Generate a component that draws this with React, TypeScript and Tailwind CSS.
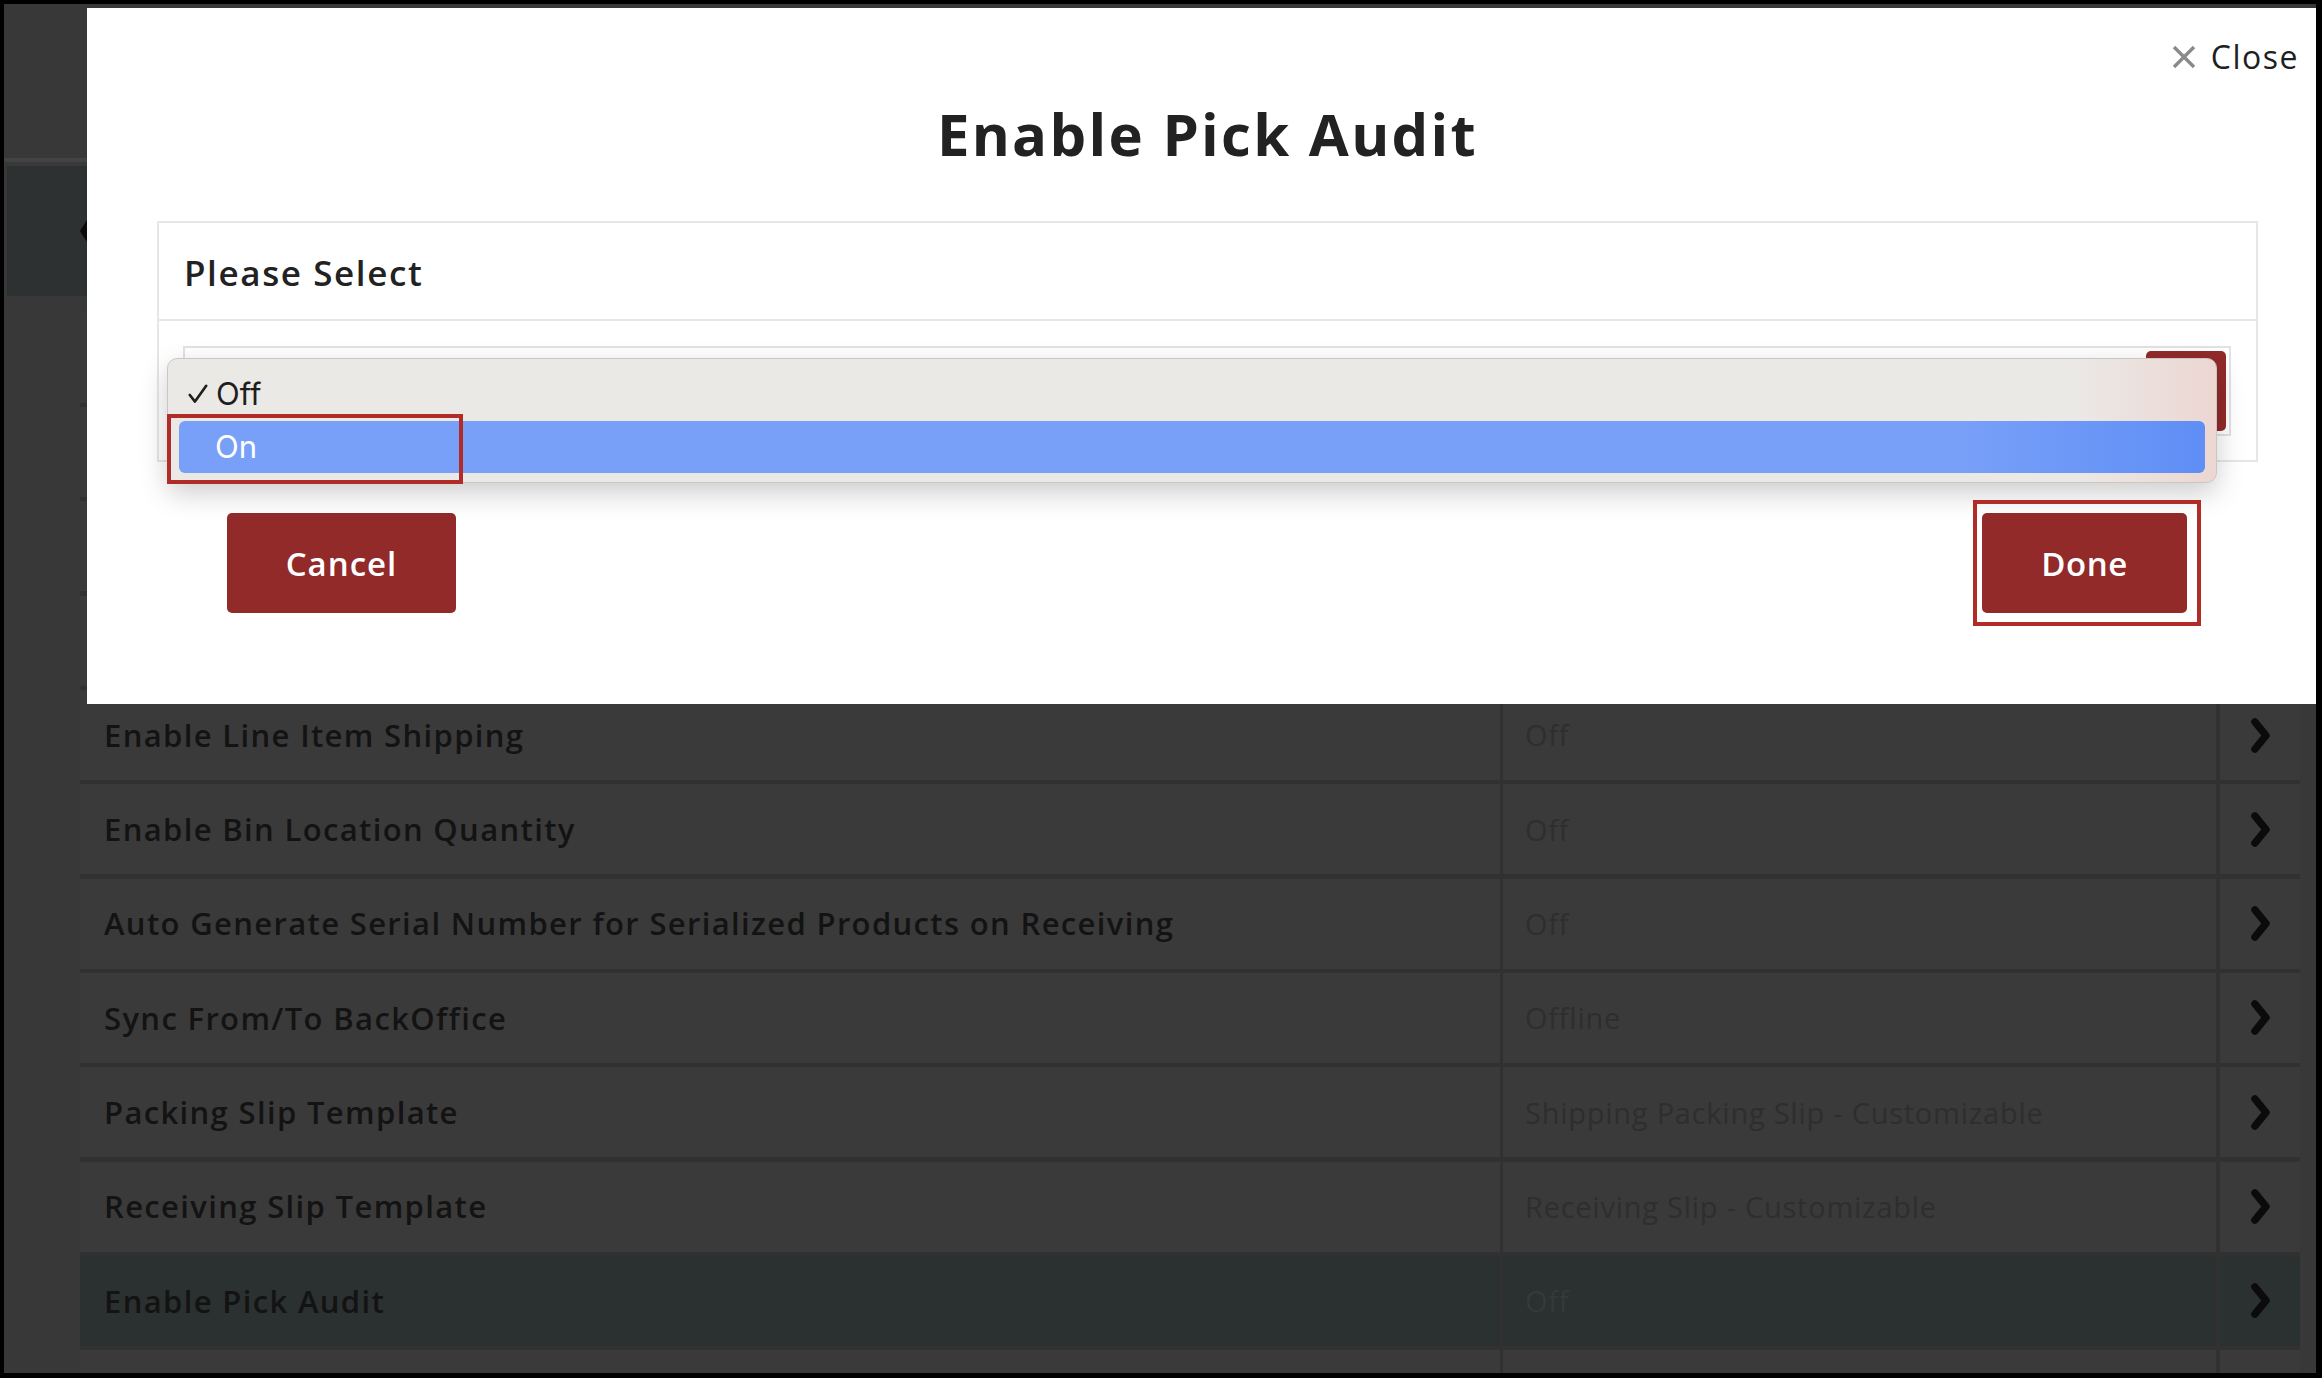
import React from "react";

type Row = { label: string; value: string; chevron: boolean; active?: boolean };

const rows: Row[] = [
  { label: "", value: "", chevron: false },
  { label: "", value: "", chevron: false },
  { label: "", value: "", chevron: false },
  { label: "", value: "", chevron: false },
  { label: "Enable Line Item Shipping", value: "Off", chevron: true },
  { label: "Enable Bin Location Quantity", value: "Off", chevron: true },
  { label: "Auto Generate Serial Number for Serialized Products on Receiving", value: "Off", chevron: true },
  { label: "Sync From/To BackOffice", value: "Offline", chevron: true },
  { label: "Packing Slip Template", value: "Shipping Packing Slip - Customizable", chevron: true },
  { label: "Receiving Slip Template", value: "Receiving Slip - Customizable", chevron: true },
  { label: "Enable Pick Audit", value: "Off", chevron: true, active: true },
  { label: "", value: "", chevron: false },
];

function ChevronRight() {
  return (
    <svg width="22" height="35" viewBox="0 0 22 35" aria-hidden="true">
      <polyline points="5,4 16,17.5 5,31" fill="none" stroke="#0b0b0b" strokeWidth="7.5" strokeLinecap="round" strokeLinejoin="round" />
    </svg>
  );
}

function ChevronLeft() {
  return (
    <svg width="18" height="30" viewBox="0 0 18 30" aria-hidden="true">
      <polygon points="17.5,0 9.5,0 0,15 9.5,30 17.5,30 8,15" fill="#0b0b0b" />
    </svg>
  );
}

function BackgroundPage() {
  return (
    <div className="flex flex-col">
      <div className="h-[154px] bg-[#383838]" />
      <div className="h-[4px] bg-[#434343]" />
      <div className="h-[4px] bg-[#393939]" />
      <div className="h-[130px] ml-[3px] bg-[#2d3131] flex items-center pl-[73px]">
        <ChevronLeft />
      </div>
      <div className="h-[16.7px]" />
      <div className="ml-[76px] w-[2220px] flex flex-col gap-[4.33px] bg-[#313131]">
        {rows.map((r, i) => {
          const bg = r.active ? "bg-[#2b3030]" : "bg-[#3a3a3a]";
          const valueColor = r.active ? "text-[#353939]" : "text-[#2e2e2e]";
          return (
            <div key={i} className="h-[90px] flex gap-[3px] shrink-0">
              <div className={`w-[1420px] flex items-center pl-[24px] ${bg}`}>
                <span className="text-[31px] font-semibold tracking-[1.35px] text-[#131313]">{r.label}</span>
              </div>
              <div className={`w-[713px] flex items-center pl-[22px] ${bg}`}>
                <span className={`text-[29px] font-normal tracking-[0.75px] ${valueColor}`}>{r.value}</span>
              </div>
              <div className={`ml-[1px] flex-1 flex items-center justify-center pl-[2px] ${bg}`}>
                {r.chevron ? <ChevronRight /> : null}
              </div>
            </div>
          );
        })}
      </div>
    </div>
  );
}

function CheckIcon() {
  return (
    <svg width="20" height="20" viewBox="0 0 20 20" aria-hidden="true">
      <polyline points="1.8,11 7,17.6 18.2,1.8" fill="none" stroke="#1e1e1e" strokeWidth="2.6" strokeLinecap="round" strokeLinejoin="round" />
    </svg>
  );
}

function CloseX() {
  return (
    <svg width="26" height="24" viewBox="0 0 26 24" aria-hidden="true">
      <line x1="3" y1="2" x2="23" y2="22" stroke="#8a8a8a" strokeWidth="3.4" />
      <line x1="23" y1="2" x2="3" y2="22" stroke="#8a8a8a" strokeWidth="3.4" />
    </svg>
  );
}

function Modal() {
  return (
    <div className="absolute left-[83px] top-[4px] w-[2241px] h-[696px] bg-white flex flex-col">
      <div className="flex justify-end pr-[29px] pt-[27px]">
        <div className="flex items-center gap-[14px] h-[44px] text-[32px] leading-[44px] tracking-[1.5px] text-[#1f1f1f]">
          <CloseX />
          <span>Close</span>
        </div>
      </div>
      <h1 className="mt-[20px] text-center text-[58px] leading-[70px] font-bold text-[#222222] tracking-[2.3px]">
        Enable Pick Audit
      </h1>
      <div className="mt-[52px] mx-[70px] border-2 border-[#e6e6e6]">
        <div className="h-[98px] flex items-center pl-[25px] pt-[4px] border-b-2 border-[#e6e6e6]">
          <span className="text-[35px] font-semibold text-[#222222] tracking-[1.6px]">Please Select</span>
        </div>
        <div className="pt-[25px] pb-[24px] pl-[24px] pr-[25px]">
          <div className="relative h-[90px] border-2 border-[#e2e2e2] flex justify-end p-[3px]">
            <div className="w-[80px] h-[80px] rounded-[5px] bg-[#922a2a]" />
            <div className="absolute left-[-18px] top-[10px] w-[2050px] h-[125px] rounded-[10px] border border-[#c9c7c4] bg-[linear-gradient(to_right,#ebe9e6_93%,#ecd6d2_100%)] shadow-[0_10px_28px_rgba(0,0,0,0.2)] font-['Inter',sans-serif]">
              <div className="h-[62px] flex items-center pl-[20px] pt-[8px]">
                <CheckIcon />
                <span className="ml-[8px] text-[31px] text-[#1e1e1e]">Off</span>
              </div>
              <div className="mx-[11px] h-[52px] rounded-[6px] bg-[linear-gradient(to_right,#78a0f9_88%,#5f8ef5_100%)] flex items-center pl-[36px]">
                <span className="text-[31px] text-white">On</span>
              </div>
              <div className="absolute left-[-1px] top-[55px] w-[296px] h-[70px] border-[4px] border-[#b12c26]" />
            </div>
          </div>
        </div>
      </div>
      <div className="mt-[51px] flex justify-between pl-[140px] pr-[141px]">
        <div className="w-[229px] h-[100px] rounded-[5px] bg-[#922a2a] flex items-center justify-center pt-[2px]">
          <span className="text-[33px] font-semibold text-white tracking-[1px]">Cancel</span>
        </div>
        <div className="relative w-[205px] h-[100px]">
          <div className="w-[205px] h-[100px] rounded-[5px] bg-[#922a2a] flex items-center justify-center pt-[2px]">
            <span className="text-[33px] font-semibold text-white tracking-[0.6px]">Done</span>
          </div>
          <div className="absolute left-[-9px] right-[-14px] top-[-13px] bottom-[-13px] border-[4px] border-[#b12c26]" />
        </div>
      </div>
    </div>
  );
}

export default function App() {
  return (
    <div className="w-[2322px] h-[1378px] bg-black pt-[4px] pl-[4px] font-['Open_Sans',sans-serif]">
      <div className="relative w-[2312px] h-[1369px] overflow-hidden bg-[#383838]">
        <BackgroundPage />
        <Modal />
      </div>
    </div>
  );
}
